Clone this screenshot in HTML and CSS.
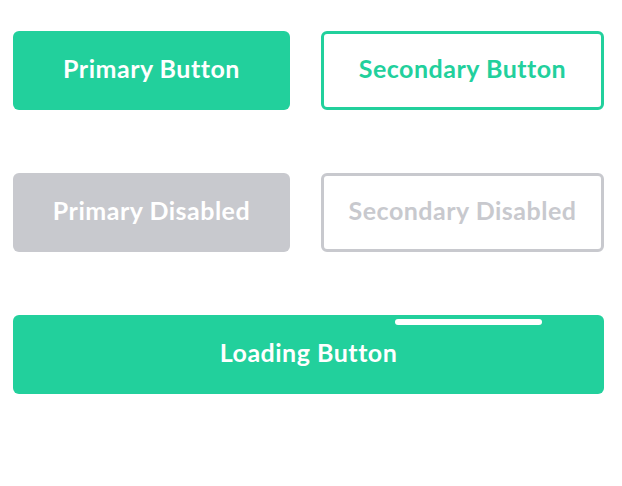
FILE: index.html
```html
<!DOCTYPE html>
<html>
<head>
<meta charset="utf-8">
<link rel="stylesheet" href="styles.css">
</head>
<body>
<div class="grid">
  <button class="btn primary">Primary Button</button>
  <button class="btn secondary">Secondary Button</button>
  <button class="btn primary-disabled">Primary Disabled</button>
  <button class="btn secondary-disabled">Secondary Disabled</button>
  <button class="btn primary loading"><span class="bar"></span>Loading Button</button>
</div>
</body>
</html>
```
FILE: styles.css
```css
html, body {
  margin: 0;
  padding: 0;
  background: #ffffff;
}
.grid {
  display: grid;
  grid-template-columns: 277px 283px;
  column-gap: 31px;
  row-gap: 63px;
  padding: 31px 0 0 13px;
}
.btn {
  box-sizing: border-box;
  height: 79px;
  border-radius: 6px;
  border: none;
  font-family: "Lato", "Open Sans", sans-serif;
  font-weight: 700;
  font-size: 25px;
  letter-spacing: 0.5px;
  line-height: 1;
  display: flex;
  align-items: center;
  justify-content: center;
  padding: 0 0 4px 0;
  margin: 0;
  cursor: pointer;
}
.primary {
  background: #22d09c;
  color: #ffffff;
}
.secondary {
  background: #ffffff;
  color: #22d09c;
  border: 3px solid #22d09c;
}
.primary-disabled {
  background: #c8c9ce;
  color: #ffffff;
}
.secondary-disabled {
  background: #ffffff;
  color: #c8c9ce;
  border: 3px solid #c8c9ce;
}
.loading {
  grid-column: 1 / span 2;
  position: relative;
}
.bar {
  position: absolute;
  top: 4px;
  left: 382px;
  width: 147px;
  height: 6px;
  border-radius: 3px;
  background: #ffffff;
}
```
